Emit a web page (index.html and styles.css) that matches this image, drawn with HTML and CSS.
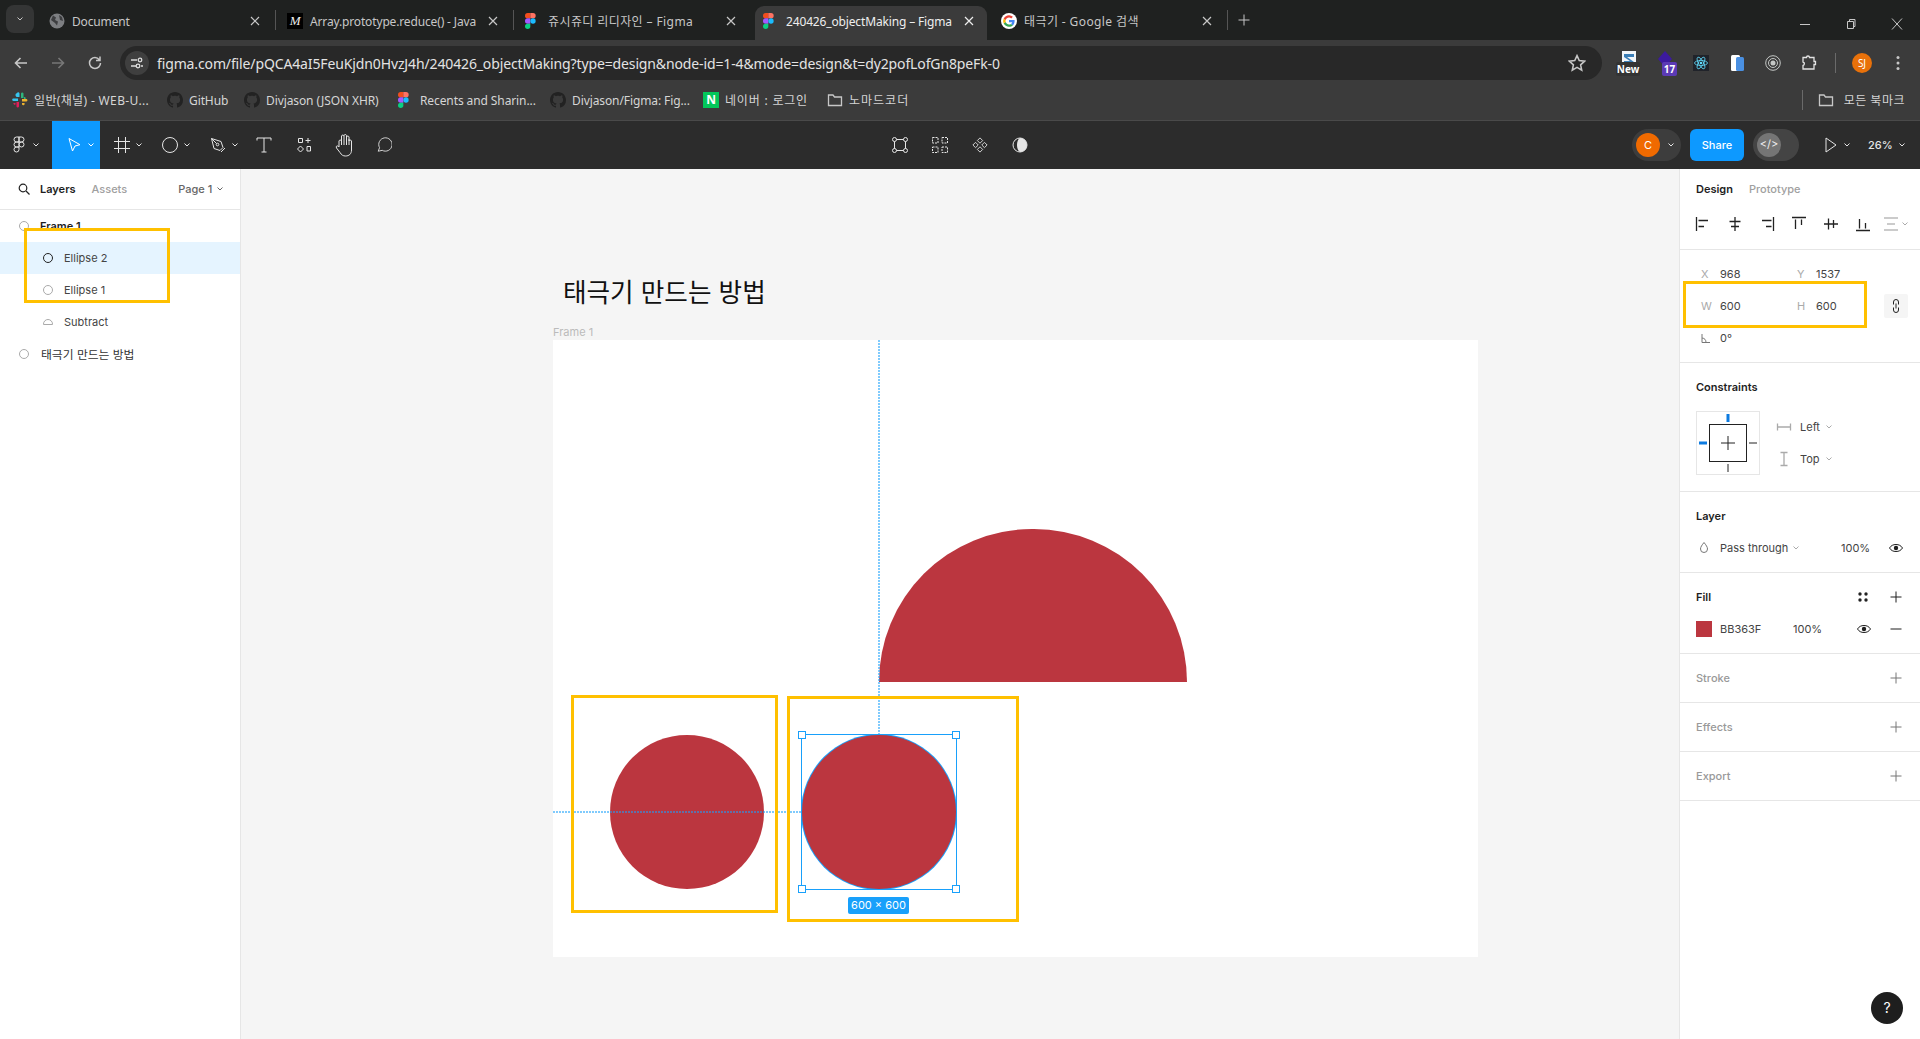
FILE: index.html
```html
<!DOCTYPE html>
<html lang="ko">

<head>
    <meta charset="utf-8">
    <title>240426_objectMaking – Figma</title>
    <link rel="stylesheet" href="styles.css">
</head>

<body>
    <svg class="defs" width="0" height="0">
        <symbol id="chev" viewBox="0 0 6 4"><path d="M.5.5 3 3 5.500.5" fill="none" stroke="currentColor"/></symbol>
        <symbol id="x" viewBox="0 0 12 12"><path d="M2 2l8 8M10 2l-8 8" fill="none" stroke="currentColor" stroke-width="1.200"/></symbol>
        <symbol id="figma" viewBox="0 0 12 18" preserveAspectRatio="xMinYMid meet">
            <path d="M3 0h3v6H3a3 3 0 010-6z" fill="#f24e1e"/>
            <path d="M6 0h3a3 3 0 010 6H6z" fill="#ff7262"/>
            <path d="M3 6h3v6H3a3 3 0 010-6z" fill="#a259ff"/>
            <circle cx="9" cy="9" r="3" fill="#1abcfe"/>
            <path d="M3 12h3v3a3 3 0 11-3-3z" fill="#0acf83"/>
        </symbol>
        <symbol id="octo" viewBox="0 0 16 16">
            <path fill="#222" d="M8 0C3.580 0 0 3.580 0 8c0 3.540 2.290 6.530 5.470 7.590.4.070.55-.17.55-.38 0-.19-.01-.82-.01-1.490-2.010.37-2.530-.49-2.690-.94-.09-.23-.48-.94-.82-1.130-.28-.15-.68-.52-.01-.53.63-.01 1.080.58 1.230.82.72 1.210 1.870.87 2.330.66.07-.52.28-.87.51-1.070-1.780-.2-3.640-.89-3.640-3.950 0-.87.31-1.590.82-2.150-.08-.2-.36-1.020.08-2.120 0 0 .67-.21 2.200.82.64-.18 1.320-.27 2-.27s1.360.09 2 .27c1.530-1.040 2.200-.82 2.200-.82.44 1.100.16 1.920.08 2.120.51.56.82 1.270.82 2.150 0 3.070-1.870 3.750-3.650 3.950.29.25.54.73.54 1.480 0 1.070-.01 1.930-.01 2.200 0 .21.15.46.55.38A8.013 8.013 0 0016 8c0-4.420-3.580-8-8-8z"/>
        </symbol>
        <symbol id="folder" viewBox="0 0 16 16"><path d="M1.500 3h4.500l1.500 2h7v8.500h-13z" fill="none" stroke="currentColor" stroke-width="1.300"/></symbol>
        <symbol id="plus" viewBox="0 0 16 16"><path d="M8 2.500v11M2.500 8h11" fill="none" stroke="currentColor"/></symbol>
        <symbol id="eye" viewBox="0 0 16 16">
            <path d="M1.500 8C3 5.500 5.300 4.500 8 4.500s5 1 6.500 3.500C13 10.500 10.700 11.500 8 11.500S3 10.500 1.500 8z" fill="none" stroke="currentColor"/>
            <circle cx="8" cy="8" r="2.200" fill="currentColor"/>
        </symbol>
    </svg>

    <div class="tabstrip">
        <button class="tab-search"><svg class="ic6" viewBox="0 0 6 4"><path d="M.5.5 3 3 5.500.5" fill="none" stroke="currentColor" stroke-width="1"/></svg></button>
        <div class="tab">
            <svg class="favicon" viewBox="0 0 16 16"><circle cx="8" cy="8" r="7.500" fill="#7d7f82"/><path d="M4 2.500l3 2-1 2.500 3 1.500-1 4-2-2.500L2 7zM10 2l3 2 1 4-3-1z" fill="#3d3e40"/></svg>
            <span class="tab-title">Document</span>
            <svg class="tab-x"><use href="#x"/></svg>
        </div>
        <i class="tab-sep"></i>
        <div class="tab">
            <span class="mdn-icon">M</span>
            <span class="tab-title">Array.prototype.reduce() - Java</span>
            <svg class="tab-x"><use href="#x"/></svg>
        </div>
        <i class="tab-sep"></i>
        <div class="tab">
            <svg class="favicon"><use href="#figma"/></svg>
            <span class="tab-title ko">쥬시쥬디 리디자인 – Figma</span>
            <svg class="tab-x"><use href="#x"/></svg>
        </div>
        <i class="tab-sep off"></i>
        <div class="tab active">
            <svg class="favicon"><use href="#figma"/></svg>
            <span class="tab-title">240426_objectMaking – Figma</span>
            <svg class="tab-x"><use href="#x"/></svg>
        </div>
        <i class="tab-sep off"></i>
        <div class="tab">
            <svg class="favicon" viewBox="0 0 16 16">
                <circle cx="8" cy="8" r="8" fill="#fff"/>
                <path d="M13.600 8.100c0-.4 0-.8-.1-1.200H8v2.300h3.200a2.700 2.700 0 01-1.200 1.800l1.900 1.500c1.100-1 1.700-2.500 1.700-4.400z" fill="#4285f4"/>
                <path d="M8 13.800c1.600 0 2.900-.5 3.900-1.400L10 10.900c-.5.4-1.200.6-2 .6-1.500 0-2.800-1-3.300-2.400l-2 1.500c1 2 3 3.200 5.300 3.200z" fill="#34a853"/>
                <path d="M4.700 9.100a3.500 3.500 0 010-2.200l-2-1.500a5.900 5.900 0 000 5.200z" fill="#fbbc05"/>
                <path d="M8 4.500c.9 0 1.600.3 2.200.9l1.700-1.700A5.800 5.800 0 008 2.200c-2.300 0-4.300 1.300-5.300 3.200l2 1.500C5.200 5.500 6.500 4.500 8 4.500z" fill="#ea4335"/>
            </svg>
            <span class="tab-title ko">태극기 - Google 검색</span>
            <svg class="tab-x"><use href="#x"/></svg>
        </div>
        <i class="tab-sep"></i>
        <svg class="new-tab"><use href="#plus"/></svg>
        <div class="win-ctrl">
            <svg viewBox="0 0 12 12"><path d="M1 6.500h10" stroke="currentColor" fill="none"/></svg>
            <svg viewBox="0 0 12 12"><path d="M2.500 3.500h6v7h-6zM4.500 3.500V1.500h5.500v7H8.500" stroke="currentColor" fill="none"/></svg>
            <svg viewBox="0 0 12 12"><path d="M1 .5l10 11M11 .5l-10 11" stroke="currentColor" fill="none"/></svg>
        </div>
    </div>

    <div class="navbar">
        <button class="nav-btn"><svg viewBox="0 0 16 16"><path d="M14 8H3M7.500 3 2.500 8l5 5" fill="none" stroke="currentColor" stroke-width="1.600"/></svg></button>
        <button class="nav-btn dim"><svg viewBox="0 0 16 16"><path d="M2 8h11M8.500 3l5 5-5 5" fill="none" stroke="currentColor" stroke-width="1.600"/></svg></button>
        <button class="nav-btn"><svg viewBox="0 0 16 16"><path d="M13.500 8A5.500 5.500 0 118 2.500c2 0 3.300 1 4.500 2.500M13 1.500V5.500H9" fill="none" stroke="currentColor" stroke-width="1.500"/></svg></button>
        <div class="omnibox">
            <span class="site-info"><svg viewBox="0 0 14 14"><path d="M1 4h6M11 10h2M1 10h5" stroke="#ddd" stroke-width="1.300" fill="none"/><circle cx="10" cy="4" r="1.800" fill="none" stroke="#ddd" stroke-width="1.300"/><circle cx="8" cy="10" r="1.800" fill="none" stroke="#ddd" stroke-width="1.300"/></svg></span>
            <span class="url">figma.com/file/pQCA4aI5FeuKjdn0HvzJ4h/240426_objectMaking?type=design&amp;node-id=1-4&amp;mode=design&amp;t=dy2pofLofGn8peFk-0</span>
            <svg class="star" viewBox="0 0 16 16"><path d="M8 1.500l2 4.400 4.800.5-3.600 3.200 1 4.700L8 11.900l-4.200 2.400 1-4.700L1.200 6.400 6 5.900z" fill="none" stroke="currentColor" stroke-width="1.400"/></svg>
        </div>
        <div class="ext">
            <svg class="ext-doc" viewBox="0 0 16 16"><path d="M1 0h14v16H1z" fill="#f2f6fa"/><path d="M3 3h10v3H6l7 5-3 2H3v-3h6L3 6z" fill="#3b7fb8"/></svg>
            <b class="badge-new">New</b>
        </div>
        <div class="ext">
            <svg class="ext-doc" viewBox="0 0 16 16"><path d="M8 0l7 8-7 8-7-8z" fill="#3c1a9e"/></svg>
            <b class="badge-num">17</b>
        </div>
        <div class="ext">
            <svg viewBox="0 0 16 16" class="ext-ic"><rect width="16" height="16" fill="#20232a"/><g fill="none" stroke="#61dafb" stroke-width=".8"><ellipse cx="8" cy="8" rx="6.500" ry="2.500"/><ellipse cx="8" cy="8" rx="6.500" ry="2.500" transform="rotate(60 8 8)"/><ellipse cx="8" cy="8" rx="6.500" ry="2.500" transform="rotate(120 8 8)"/></g><circle cx="8" cy="8" r="1.300" fill="#61dafb"/></svg>
        </div>
        <div class="ext">
            <svg viewBox="0 0 16 16" class="ext-ic"><rect x="2" y="0" width="9" height="16" rx="1.500" fill="#fff"/><rect x="7" y="2" width="8" height="14" rx="1.500" fill="#4a90e2"/></svg>
        </div>
        <div class="ext">
            <svg viewBox="0 0 16 16" class="ext-ic"><g fill="none" stroke="#c4c7c5"><circle cx="8" cy="8" r="7.300"/><circle cx="8" cy="8" r="4.500"/></g><circle cx="8" cy="8" r="2.500" fill="#c4c7c5"/></svg>
        </div>
        <div class="ext">
            <svg viewBox="0 0 16 16" class="ext-ic"><path d="M2 2.500h3.500a1.500 1.500 0 013 0H13v4h1.500v3H13v4.500H2v-3.500a1.800 1.800 0 000-3.500z" fill="none" stroke="#e3e3e3" stroke-width="1.300"/></svg>
        </div>
        <i class="nav-sep"></i>
        <div class="profile"><span class="profile-pic">SJ</span></div>
        <button class="nav-btn dots"><svg viewBox="0 0 4 16"><circle cx="2" cy="2.500" r="1.500" fill="currentColor"/><circle cx="2" cy="8" r="1.500" fill="currentColor"/><circle cx="2" cy="13.500" r="1.500" fill="currentColor"/></svg></button>
    </div>

    <div class="bookmarks">
        <div class="bm">
            <svg class="favicon" viewBox="0 0 16 16">
                <path d="M1 6.500h5V9H1.500A1.300 1.300 0 011 6.500zM5 1a1.300 1.300 0 012.500.5V5H6A1.300 1.300 0 015 1z" fill="#36c5f0"/>
                <path d="M9 1.500a1.300 1.300 0 012.500 0V6H9zM12 5a1.300 1.300 0 011.500 2H12z" fill="#2eb67d"/>
                <path d="M10 7h4.500a1.300 1.300 0 010 2.500H10zM11 11h1.500a1.300 1.300 0 01-2.500 1.500V11z" fill="#ecb22e"/>
                <path d="M7 10v4.500a1.300 1.300 0 01-2.500 0V10zM3.500 11v1.500A1.300 1.300 0 011.500 11z" fill="#e01e5a"/>
            </svg>
            <span class="w116 spread">일반(채널) - WEB-U...</span>
        </div>
        <div class="bm"><svg class="favicon"><use href="#octo"/></svg><span class="w38">GitHub</span></div>
        <div class="bm"><svg class="favicon"><use href="#octo"/></svg><span class="w115">Divjason (JSON XHR)</span></div>
        <div class="bm"><svg class="favicon"><use href="#figma"/></svg><span class="w113">Recents and Sharin...</span></div>
        <div class="bm"><svg class="favicon"><use href="#octo"/></svg><span class="w114">Divjason/Figma: Fig...</span></div>
        <div class="bm"><span class="naver">N</span><span class="w83 spread-more">네이버 : 로그인</span></div>
        <div class="bm"><svg class="favicon bm-folder"><use href="#folder"/></svg><span class="spread-most">노마드코더</span></div>
        <div class="bm-all">
            <i class="nav-sep"></i>
            <svg class="favicon bm-folder"><use href="#folder"/></svg>
            <span>모든 북마크</span>
        </div>
    </div>

    <div class="figma-bar">
        <div class="bar-side">
            <div class="tool wide-first">
                <svg class="logo-ic" viewBox="0 0 12 18"><path d="M6 1H3.500a2.500 2.500 0 000 5H6zM6 1h2.500a2.500 2.500 0 010 5H6zM6 6H3.500a2.500 2.500 0 000 5H6zM6 11H3.500A2.500 2.500 0 106 13.500z" fill="none" stroke="currentColor"/><circle cx="8.500" cy="8.500" r="2.500" fill="none" stroke="currentColor"/></svg>
                <svg class="ic6"><use href="#chev"/></svg>
            </div>
            <div class="tool has-chev on">
                <svg viewBox="0 0 16 16"><path d="M3 1.500l11 6.200-5 1.300-2.500 5z" fill="none" stroke="currentColor"/></svg>
                <svg class="ic6"><use href="#chev"/></svg>
            </div>
            <div class="tool has-chev">
                <svg viewBox="0 0 16 16"><path d="M4.500 0v16M11.500 0v16M0 4.500h16M0 11.500h16" fill="none" stroke="currentColor"/></svg>
                <svg class="ic6"><use href="#chev"/></svg>
            </div>
            <div class="tool has-chev">
                <svg viewBox="0 0 16 16"><circle cx="8" cy="8" r="7.500" fill="none" stroke="currentColor"/></svg>
                <svg class="ic6"><use href="#chev"/></svg>
            </div>
            <div class="tool has-chev">
                <svg viewBox="0 0 16 16"><path d="M1.500 1.500l9.500 3 2 6-3 3-6-2zM1.500 1.500l5 5M15 11l-4 4" fill="none" stroke="currentColor"/><circle cx="7.500" cy="7.500" r="1.300" fill="none" stroke="currentColor"/></svg>
                <svg class="ic6"><use href="#chev"/></svg>
            </div>
            <div class="tool">
                <svg viewBox="0 0 16 16"><path d="M1 3.500V1h14v2.500M8 1v14M5.500 15h5" fill="none" stroke="currentColor"/></svg>
            </div>
            <div class="tool">
                <svg viewBox="0 0 16 16"><path d="M2.500 1.500h4v4h-4zM12 1v5M9.500 3.500h5M11 9.500h3.500V14H11zM4.500 9l3 3-3 3-3-3z" fill="none" stroke="currentColor"/></svg>
            </div>
            <div class="tool tall">
                <svg viewBox="0 0 18 24"><path d="M4 14V8a1.300 1.300 0 012.500 0V3a1.300 1.300 0 012.500 0v-.5a1.300 1.300 0 012.500 0V4a1.300 1.300 0 012.500 0v4a1.300 1.300 0 012.500 0v9c0 4-2.500 6-6 6-2.500 0-4-1-5.500-3.500L1.500 15c-1-2 1-3 2.500-1zM6.500 4v8M9 3v9M11.500 4v8M14 6v6" fill="none" stroke="currentColor"/></svg>
            </div>
            <div class="tool">
                <svg viewBox="0 0 18 18"><path d="M2.500 16l1.500-4a7.500 7.500 0 113 3z" fill="none" stroke="currentColor"/></svg>
            </div>
        </div>
        <div class="bar-center">
            <div class="tool">
                <svg viewBox="0 0 16 16"><path d="M2.500 2.500h11v11h-11z" fill="none" stroke="currentColor"/><g fill="#2c2c2c" stroke="currentColor"><circle cx="2.500" cy="2.500" r="2"/><circle cx="13.500" cy="2.500" r="2"/><circle cx="2.500" cy="13.500" r="2"/><circle cx="13.500" cy="13.500" r="2"/></g></svg>
            </div>
            <div class="tool">
                <svg viewBox="0 0 16 16"><path d="M.5.500h5.500v5.500H.5zM10 .5h5.500v5.500H10zM.5 10h5.500v5.500H.5zM10 10h5.500v5.500H10z" fill="none" stroke="currentColor" stroke-dasharray="2 1"/></svg>
            </div>
            <div class="tool">
                <svg viewBox="0 0 18 18"><path d="M9 1l3 3-3 3-3-3zM9 11l3 3-3 3-3-3zM4 6l3 3-3 3-3-3zM14 6l3 3-3 3-3-3z" fill="none" stroke="currentColor"/></svg>
            </div>
            <div class="tool">
                <svg viewBox="0 0 16 16"><circle cx="8" cy="8" r="7" fill="#2c2c2c" stroke="currentColor"/><path d="M8 1a7 7 0 010 14c-2-1-3-4-3-7s1-6 3-7z" fill="currentColor"/></svg>
            </div>
        </div>
        <div class="bar-side right">
            <div class="avatar-pill">
                <span class="avatar">C</span>
                <svg class="ic6"><use href="#chev"/></svg>
            </div>
            <button class="share">Share</button>
            <div class="dev-toggle"><span class="dev-knob">&lt;/&gt;</span></div>
            <div class="play">
                <svg viewBox="0 0 12 16"><path d="M1 1l10 7-10 7z" fill="none" stroke="currentColor"/></svg>
                <svg class="ic6"><use href="#chev"/></svg>
            </div>
            <div class="zoom-val">
                <span>26%</span>
                <svg class="ic6"><use href="#chev"/></svg>
            </div>
        </div>
    </div>

    <div class="workspace">
        <div class="left-panel">
            <div class="panel-tabs">
                <svg class="search" viewBox="0 0 12 12"><circle cx="5" cy="5" r="3.800" fill="none" stroke="currentColor" stroke-width="1.200"/><path d="M8 8l3.500 3.500" stroke="currentColor" stroke-width="1.200"/></svg>
                <span class="strong">Layers</span>
                <span class="muted">Assets</span>
                <span class="page">Page 1 <svg class="ic6"><use href="#chev"/></svg></span>
            </div>
            <ul class="layers">
                <li class="strong"><i class="l-ring"></i>Frame 1</li>
                <li class="child selected"><i class="l-ring dark"></i>Ellipse 2</li>
                <li class="child"><i class="l-ring"></i>Ellipse 1</li>
                <li class="child"><i class="l-dome"></i>Subtract</li>
                <li class="text-layer"><i class="l-ring"></i><span class="text-layer-name">태극기 만드는 방법</span></li>
            </ul>
        </div>

        <div class="canvas">
            <div class="title">태극기 만드는 방법</div>
            <div class="frame-label">Frame 1</div>
            <div class="frame">
                <div class="dome"></div>
                <div class="disc disc-one"></div>
                <div class="disc disc-two"></div>
                <i class="guide-v"></i>
                <i class="guide-h"></i>
                <div class="selection">
                    <i class="handle tl"></i><i class="handle tr"></i>
                    <i class="handle bl"></i><i class="handle br"></i>
                </div>
                <div class="size-label">600 × 600</div>
            </div>
        </div>

        <div class="right-panel">
            <div class="panel-tabs design-tabs">
                <span class="strong">Design</span>
                <span class="muted">Prototype</span>
            </div>
            <div class="align-row">
                <svg viewBox="0 0 16 16"><path d="M1.500 1v14M3.500 4.500H13M3.500 10.500H9" fill="none" stroke="currentColor" stroke-width="1.300"/></svg>
                <svg viewBox="0 0 16 16"><path d="M8 1v14M2.500 5.500h11M4 10.500h8" fill="none" stroke="currentColor" stroke-width="1.300"/></svg>
                <svg viewBox="0 0 16 16"><path d="M14.500 1v14M3 4.500h9.500M7 10.500h5.500" fill="none" stroke="currentColor" stroke-width="1.300"/></svg>
                <svg viewBox="0 0 16 16"><path d="M1 1.500h14M4.500 3.500V13M10.500 3.500V9" fill="none" stroke="currentColor" stroke-width="1.300"/></svg>
                <svg viewBox="0 0 16 16"><path d="M1 8h14M5.500 2.500v11M10.500 4v8" fill="none" stroke="currentColor" stroke-width="1.300"/></svg>
                <svg viewBox="0 0 16 16"><path d="M1 14.500h14M4.500 3v9.500M10.500 7v5.500" fill="none" stroke="currentColor" stroke-width="1.300"/></svg>
                <span class="align-more">
                    <svg viewBox="0 0 16 16"><path d="M1 2h14M1 14h14M4 8h8" fill="none" stroke="#bbb" stroke-width="1.300"/></svg>
                    <svg class="ic6 grey"><use href="#chev"/></svg>
                </span>
            </div>
            <section class="geo">
                <div class="geo-row"><label>X</label><span class="val">968</span><label>Y</label><span class="val">1537</span></div>
                <div class="geo-row"><label>W</label><span class="val">600</span><label>H</label><span class="val">600</span>
                    <span class="link-btn"><svg viewBox="0 0 16 16"><path d="M5.500 6.500V4a2.500 2.500 0 015 0v2.500M5.500 9.500V12a2.500 2.500 0 005 0V9.500M8 5.500v5" fill="none" stroke="#222"/></svg></span>
                </div>
                <div class="geo-row"><label><svg class="angle" viewBox="0 0 9 9"><path d="M1 0v8.500h8M1 4a4.500 4.500 0 014 4.500" fill="none" stroke="#777"/></svg></label><span class="val">0°</span></div>
            </section>
            <section class="constraints">
                <h3>Constraints</h3>
                <div class="constraint-body">
                    <svg class="c-box" viewBox="0 0 64 64">
                        <rect x=".5" y=".5" width="63" height="63" fill="#fff" stroke="#e6e6e6"/>
                        <rect x="13.500" y="13.500" width="37" height="37" fill="none" stroke="#222"/>
                        <path d="M32 25v14M25 32h14M32 53v8M53 32h8" stroke="#222" fill="none"/>
                        <path d="M32 3v8M3 32h8" stroke="#0d7be0" stroke-width="3" fill="none"/>
                    </svg>
                    <div class="c-list">
                        <div class="c-item"><svg viewBox="0 0 16 16"><path d="M1.500 4.500v7M14.500 4.500v7M1.500 8h13" fill="none" stroke="#aaa" stroke-width="1.300"/></svg>Left <svg class="ic6 grey"><use href="#chev"/></svg></div>
                        <div class="c-item"><svg viewBox="0 0 16 16"><path d="M4.500 1.500h7M4.500 14.500h7M8 1.500v13" fill="none" stroke="#aaa" stroke-width="1.300"/></svg>Top <svg class="ic6 grey"><use href="#chev"/></svg></div>
                    </div>
                </div>
            </section>
            <section>
                <h3>Layer</h3>
                <div class="prop-row">
                    <svg class="r-ic" viewBox="0 0 16 16"><path d="M8 2.500c2 2.500 3.500 4.500 3.500 6.500a3.500 3.500 0 01-7 0c0-2 1.500-4 3.500-6.500z" fill="none" stroke="#777"/></svg>
                    <span class="blend">Pass through <svg class="ic6 grey"><use href="#chev"/></svg></span>
                    <span class="pct-layer">100%</span>
                    <svg class="r-ic"><use href="#eye"/></svg>
                </div>
            </section>
            <section>
                <h3>Fill
                    <span class="head-icons">
                        <svg class="r-ic" viewBox="0 0 16 16"><g fill="#222"><circle cx="5" cy="5" r="1.700"/><circle cx="11" cy="5" r="1.700"/><circle cx="5" cy="11" r="1.700"/><circle cx="11" cy="11" r="1.700"/></g></svg>
                        <svg class="r-ic"><use href="#plus"/></svg>
                    </span>
                </h3>
                <div class="prop-row">
                    <span class="swatch"></span>
                    <span class="hex">BB363F</span>
                    <span class="pct-fill">100%</span>
                    <svg class="r-ic eye-fill"><use href="#eye"/></svg>
                    <svg class="r-ic" viewBox="0 0 16 16"><path d="M2.500 8h11" stroke="currentColor" fill="none"/></svg>
                </div>
            </section>
            <section><h3 class="off">Stroke <svg class="r-ic"><use href="#plus"/></svg></h3></section>
            <section><h3 class="off">Effects <svg class="r-ic"><use href="#plus"/></svg></h3></section>
            <section><h3 class="off">Export <svg class="r-ic"><use href="#plus"/></svg></h3></section>
        </div>
    </div>

    <div class="help">?</div>

    <!-- yellow boxes drawn over the screenshot -->
    <div class="mark mark-layers"></div>
    <div class="mark mark-size"></div>
    <div class="mark mark-one"></div>
    <div class="mark mark-two"></div>
</body>

</html>
```

FILE: styles.css
```css
* {
    box-sizing: border-box;
}

html,
body {
    height: 100%;
}

body {
    margin: 0;
    display: flex;
    flex-direction: column;
    position: relative;
    overflow: hidden;
    font-family: "Inter", "Noto Sans CJK KR", sans-serif;
    font-size: 11px;
    color: #333;
    background-color: #f5f5f5;
}

button {
    border: 0;
    padding: 0;
    background: none;
    color: inherit;
    font: inherit;
}

ul {
    margin: 0;
    padding: 0;
    list-style: none;
}

h3 {
    margin: 0;
    font-size: 11px;
    font-weight: 600;
}

i {
    display: block;
}

.defs {
    position: absolute;
}

.ic6 {
    width: 6px;
    height: 4px;
    flex: none;
}

/* browser chrome */
.tabstrip {
    height: 40px;
    flex: none;
    display: flex;
    align-items: flex-end;
    padding-left: 6px;
    background-color: #1f2120;
    color: #c7c7c7;
    font-family: "Noto Sans", "Noto Sans CJK KR", sans-serif;
    font-size: 12px;
    letter-spacing: -.15px;
}

.tab-search {
    width: 28px;
    height: 28px;
    margin: 0 7px 7px 0;
    border-radius: 8px;
    background-color: #343535;
    display: flex;
    align-items: center;
    justify-content: center;
}

.tab {
    width: 232px;
    height: 34px;
    padding: 0 12px 4px 8px;
    display: flex;
    align-items: center;
    gap: 7px;
}

.tab.active {
    color: #eee;
    background-color: #3b3b3b;
    border-radius: 9px 9px 0 0;
}

.tab-title {
    flex: 1;
    white-space: nowrap;
}

.tab-title.ko {
    letter-spacing: .4px;
}

.tab-x {
    width: 12px;
    height: 12px;
    flex: none;
}

.tab-sep {
    width: 1px;
    height: 20px;
    margin: 0 3px 10px 2px;
    background-color: #555;
}

.tab-sep.off {
    background-color: transparent;
}

.favicon {
    width: 16px;
    height: 16px;
    flex: none;
}

.mdn-icon {
    width: 16px;
    height: 16px;
    flex: none;
    background-color: #000;
    color: #eee;
    font-family: "Liberation Serif", serif;
    font-style: italic;
    font-size: 13px;
    line-height: 16px;
    text-align: center;
}

.new-tab {
    width: 16px;
    height: 16px;
    margin: 0 0 12px 5px;
}

.win-ctrl {
    margin: 0 17px 10px auto;
    display: flex;
    gap: 34px;
}

.win-ctrl svg {
    width: 12px;
    height: 12px;
}

.navbar {
    height: 46px;
    flex: none;
    padding: 0 4px 0 3px;
    display: flex;
    align-items: center;
    background-color: #3b3b3b;
    color: #c7c7c7;
    font-family: "Noto Sans", "Noto Sans CJK KR", sans-serif;
}

.nav-btn {
    width: 36px;
    height: 32px;
    margin-right: 1px;
    display: flex;
    align-items: center;
    justify-content: center;
}

.nav-btn svg {
    width: 16px;
    height: 16px;
}

.nav-btn.dim {
    color: #777;
}

.nav-btn.dots {
    margin: 0;
}

.nav-btn.dots svg {
    width: 4px;
}

.omnibox {
    width: 1482px;
    height: 34px;
    margin: 0 9px 0 6px;
    padding: 0 16px 0 5px;
    display: flex;
    align-items: center;
    border-radius: 17px;
    background-color: #282828;
}

.site-info {
    width: 24px;
    height: 24px;
    margin-right: 8px;
    border-radius: 50%;
    background-color: #3f3f3f;
    display: flex;
    align-items: center;
    justify-content: center;
}

.site-info svg {
    width: 14px;
    height: 14px;
}

.url {
    flex: 1;
    color: #e3e3e3;
    font-size: 14px;
    letter-spacing: -.13px;
    white-space: nowrap;
}

.star {
    width: 18px;
    height: 18px;
}

.ext {
    width: 36px;
    height: 32px;
    position: relative;
    display: flex;
    align-items: center;
    justify-content: center;
}

.ext-ic {
    width: 16px;
    height: 16px;
}

.ext-doc {
    width: 16px;
    height: 16px;
    margin-top: -8px;
}

.badge-new,
.badge-num {
    position: absolute;
    color: #fff;
    font-size: 10px;
    line-height: 14px;
    font-family: "Noto Sans", sans-serif;
    text-align: center;
    border-radius: 2px;
}

.badge-new {
    left: 5px;
    top: 15px;
    width: 24px;
    background-color: #333;
}

.badge-num {
    left: 15px;
    top: 15px;
    width: 15px;
    background-color: #5b3ab5;
}

.nav-sep {
    width: 1px;
    height: 20px;
    margin: 0 8px;
    background-color: #6a6a6a;
}

.profile {
    width: 36px;
    display: flex;
    justify-content: center;
}

.profile-pic {
    width: 20px;
    height: 20px;
    border-radius: 50%;
    background-color: #e8710a;
    color: #fff;
    font-size: 10px;
    line-height: 20px;
    text-align: center;
}

.bookmarks {
    height: 35px;
    flex: none;
    padding: 0 15px 6px 12px;
    display: flex;
    align-items: center;
    background-color: #3b3b3b;
    border-bottom: 1px solid #4a4a4a;
    color: #d5d5d5;
    font-family: "Noto Sans", "Noto Sans CJK KR", sans-serif;
    font-size: 12px;
    letter-spacing: -.1px;
}

.bm {
    display: flex;
    align-items: center;
    gap: 6px;
    margin-right: 17px;
    white-space: nowrap;
}

.w38 {
    width: 38px;
}

.w83 {
    width: 85px;
}

.w113 {
    width: 113px;
}

.w114 {
    width: 114px;
}

.w115 {
    width: 115px;
}

.w116 {
    width: 116px;
}

.spread {
    letter-spacing: .35px;
}

.spread-more {
    letter-spacing: .8px;
}

.spread-most {
    letter-spacing: 1px;
}

.bm-folder {
    color: #c7c7c7;
}

.naver {
    width: 16px;
    height: 16px;
    background-color: #03c75a;
    color: #fff;
    font-size: 12px;
    font-weight: 700;
    line-height: 16px;
    text-align: center;
}

.bm-all {
    margin-left: auto;
    display: flex;
    align-items: center;
    gap: 10px;
    letter-spacing: .5px;
}

.bm-all .nav-sep {
    margin: 0 5px 0 0;
}

/* figma toolbar */
.figma-bar {
    height: 48px;
    flex: none;
    display: flex;
    align-items: stretch;
    background-color: #2c2c2c;
    color: #e6e6e6;
}

.bar-side {
    flex: 1;
    display: flex;
    align-items: stretch;
}

.bar-side.right {
    justify-content: flex-end;
    align-items: center;
}

.bar-center {
    display: flex;
}

.tool {
    width: 40px;
    display: flex;
    align-items: center;
    justify-content: center;
}

.tool svg {
    width: 16px;
    height: 16px;
}

.tool .ic6 {
    width: 6px;
    height: 4px;
    margin-left: 6px;
}

.tool.has-chev {
    width: 48px;
    justify-content: flex-start;
    padding-left: 14px;
}

.tool.wide-first {
    width: 52px;
    justify-content: flex-start;
    padding-left: 13px;
}

.tool .logo-ic {
    width: 12px;
    height: 18px;
}

.tool.wide-first .ic6 {
    margin-left: 8px;
}

.tool.on {
    background-color: #0d99ff;
    color: #fff;
}

.tool.tall svg {
    width: 18px;
    height: 24px;
}

.avatar-pill {
    width: 49px;
    height: 32px;
    margin-right: 9px;
    padding: 0 0 0 4px;
    display: flex;
    align-items: center;
    gap: 8px;
    border-radius: 16px;
    background-color: #3d3d3d;
}

.avatar {
    width: 24px;
    height: 24px;
    border-radius: 50%;
    background-color: #f06a00;
    color: #fff;
    font-size: 11px;
    line-height: 24px;
    text-align: center;
}

.share {
    width: 54px;
    height: 32px;
    margin-right: 9px;
    border-radius: 6px;
    background-color: #0d99ff;
    color: #fff;
    font-weight: 500;
}

.dev-toggle {
    width: 46px;
    height: 32px;
    padding: 4px;
    border-radius: 16px;
    background-color: #444;
}

.dev-knob {
    display: block;
    width: 24px;
    height: 24px;
    border-radius: 50%;
    background-color: #757575;
    color: #eee;
    line-height: 23px;
    text-align: center;
}

.play {
    margin-left: 26px;
    display: flex;
    align-items: center;
    gap: 7px;
}

.play svg:first-child {
    width: 12px;
    height: 16px;
}

.zoom-val {
    width: 52px;
    margin-left: 18px;
    display: flex;
    align-items: center;
    gap: 6px;
    font-weight: 500;
}

/* panels */
.workspace {
    flex: 1;
    min-height: 0;
    display: flex;
}

.left-panel {
    width: 241px;
    background-color: #fff;
    border-right: 1px solid #e6e6e6;
}

.panel-tabs {
    height: 41px;
    padding-left: 18px;
    display: flex;
    align-items: center;
    border-bottom: 1px solid #e6e6e6;
    gap: 16px;
}

.search {
    width: 12px;
    height: 12px;
    margin-right: -6px;
    color: #222;
}

.strong {
    color: #1e1e1e;
    font-weight: 600;
}

.muted {
    color: #a0a0a0;
    font-weight: 500;
}

.page {
    margin-left: 35px;
    display: flex;
    align-items: center;
    gap: 5px;
    color: #666;
    font-weight: 500;
}

.layers li {
    height: 32px;
    padding-left: 19px;
    display: flex;
    align-items: center;
    gap: 11px;
    white-space: nowrap;
}

.layers li.child {
    padding-left: 43px;
    color: #444;
}

.layers li.selected {
    background-color: #e5f4ff;
}

.layers li.text-layer {
    gap: 12px;
    font-size: 11.800px;
}

.text-layer-name {
    margin-bottom: 2px;
}

.l-ring {
    width: 10px;
    height: 10px;
    border-radius: 50%;
    border: 1px solid #aaa;
}

.l-ring.dark {
    border-color: #222;
}

.l-dome {
    width: 10px;
    height: 6px;
    border: 1px solid #aaa;
    border-radius: 5px 5px 0 0;
}

.canvas {
    flex: 1;
    position: relative;
    background-color: #f5f5f5;
}

.title {
    position: absolute;
    left: 322px;
    top: 103px;
    color: #111;
    font-family: "Noto Sans CJK KR", sans-serif;
    font-size: 25.600px;
    line-height: 38px;
}

.frame-label {
    position: absolute;
    left: 312px;
    top: 156px;
    color: #bbb;
    font-size: 11px;
    line-height: 14px;
}

.frame {
    position: absolute;
    left: 312px;
    top: 171px;
    width: 925px;
    height: 617px;
    background-color: #fff;
}

.dome {
    position: absolute;
    left: 326px;
    top: 189px;
    width: 308px;
    height: 153px;
    border-radius: 154px 154px 0 0;
    background-color: #bb363f;
}

.disc {
    position: absolute;
    top: 395px;
    width: 154px;
    height: 154px;
    border-radius: 50%;
    background-color: #bb363f;
}

.disc-one {
    left: 57px;
}

.disc-two {
    left: 249px;
    box-shadow: 0 0 0 1px #18a0fb;
}

.guide-v {
    position: absolute;
    left: 325px;
    top: 0;
    width: 2px;
    height: 394px;
    background: repeating-linear-gradient(to bottom, rgba(24, 160, 251, .55) 0 2px, transparent 2px 3px);
}

.guide-h {
    position: absolute;
    left: 0;
    top: 471px;
    width: 248px;
    height: 2px;
    background: repeating-linear-gradient(to right, rgba(24, 160, 251, .55) 0 2px, transparent 2px 3px);
}

.selection {
    position: absolute;
    left: 248px;
    top: 394px;
    width: 156px;
    height: 156px;
    border: 1px solid #18a0fb;
}

.handle {
    position: absolute;
    width: 8px;
    height: 8px;
    background-color: #fff;
    border: 1px solid #18a0fb;
}

.tl {
    left: -4px;
    top: -4px;
}

.tr {
    right: -4px;
    top: -4px;
}

.bl {
    left: -4px;
    bottom: -4px;
}

.br {
    right: -4px;
    bottom: -4px;
}

.size-label {
    position: absolute;
    left: 295px;
    top: 557px;
    width: 61px;
    height: 17px;
    border-radius: 2px;
    background-color: #18a0fb;
    color: #fff;
    font-size: 11px;
    line-height: 17px;
    text-align: center;
}

.help {
    position: absolute;
    right: 17px;
    bottom: 15px;
    width: 32px;
    height: 32px;
    border-radius: 50%;
    background-color: #1e1e1e;
    color: #fff;
    font-size: 14px;
    line-height: 32px;
    text-align: center;
}

.right-panel {
    width: 241px;
    background-color: #fff;
    border-left: 1px solid #e6e6e6;
}

.design-tabs {
    height: 40px;
    padding-left: 16px;
    border-bottom: 0;
}

.align-row {
    height: 41px;
    padding: 0 0 11px 15px;
    display: flex;
    align-items: center;
    gap: 16px;
    border-bottom: 1px solid #e6e6e6;
    color: #222;
}

.align-row svg {
    width: 16px;
    height: 16px;
}

.align-more {
    display: flex;
    align-items: center;
    gap: 3px;
    margin-left: -4px;
}

.align-row .align-more .ic6 {
    width: 6px;
    height: 4px;
}

.grey {
    color: #aaa;
}

section {
    padding: 8px 16px;
    border-bottom: 1px solid #e6e6e6;
}

section h3 {
    height: 32px;
    display: flex;
    align-items: center;
    justify-content: space-between;
    color: #1e1e1e;
}

section h3.off {
    color: #999;
    font-weight: 500;
}

section h3.off svg {
    color: #777;
}

.geo-row {
    height: 32px;
    display: grid;
    grid-template-columns: 24px 72px 24px 68px 24px;
    align-items: center;
    color: #444;
}

.geo-row label {
    padding-left: 5px;
    color: #aaa;
}

.val {
    color: #444;
}

.angle {
    display: block;
    width: 9px;
    height: 9px;
}

.link-btn {
    width: 24px;
    height: 24px;
    border-radius: 2px;
    background-color: #f5f5f5;
    display: flex;
    align-items: center;
    justify-content: center;
}

.link-btn svg {
    width: 16px;
    height: 16px;
}

section.constraints {
    padding-bottom: 16px;
}

.constraint-body {
    margin-top: 8px;
    display: flex;
}

.c-box {
    width: 64px;
    height: 64px;
    flex: none;
}

.c-list {
    margin-left: 16px;
    display: flex;
    flex-direction: column;
}

.c-item {
    height: 32px;
    display: flex;
    align-items: center;
    gap: 8px;
    color: #444;
}

.c-item svg:first-child {
    width: 16px;
    height: 16px;
}

.c-item .ic6 {
    margin-left: -2px;
}

.prop-row {
    height: 32px;
    display: flex;
    align-items: center;
    color: #444;
}

.r-ic {
    width: 16px;
    height: 16px;
    flex: none;
    color: #1e1e1e;
}

.blend {
    width: 121px;
    margin-left: 8px;
    display: flex;
    align-items: center;
    gap: 5px;
}

.pct-layer {
    width: 39px;
    margin-right: 8px;
}

.head-icons {
    display: flex;
    gap: 17px;
}

.swatch {
    width: 16px;
    height: 16px;
    flex: none;
    background-color: #bb363f;
}

.hex {
    width: 73px;
    margin-left: 8px;
}

.pct-fill {
    width: 63px;
}

.eye-fill {
    margin-right: 16px;
}

/* annotation boxes */
.mark {
    position: absolute;
    border: 3px solid #ffc000;
    pointer-events: none;
}

.mark-layers {
    left: 24px;
    top: 228px;
    width: 146px;
    height: 75px;
}

.mark-size {
    left: 1683px;
    top: 281px;
    width: 184px;
    height: 47px;
}

.mark-one {
    left: 571px;
    top: 695px;
    width: 207px;
    height: 218px;
}

.mark-two {
    left: 787px;
    top: 696px;
    width: 232px;
    height: 226px;
}
```
